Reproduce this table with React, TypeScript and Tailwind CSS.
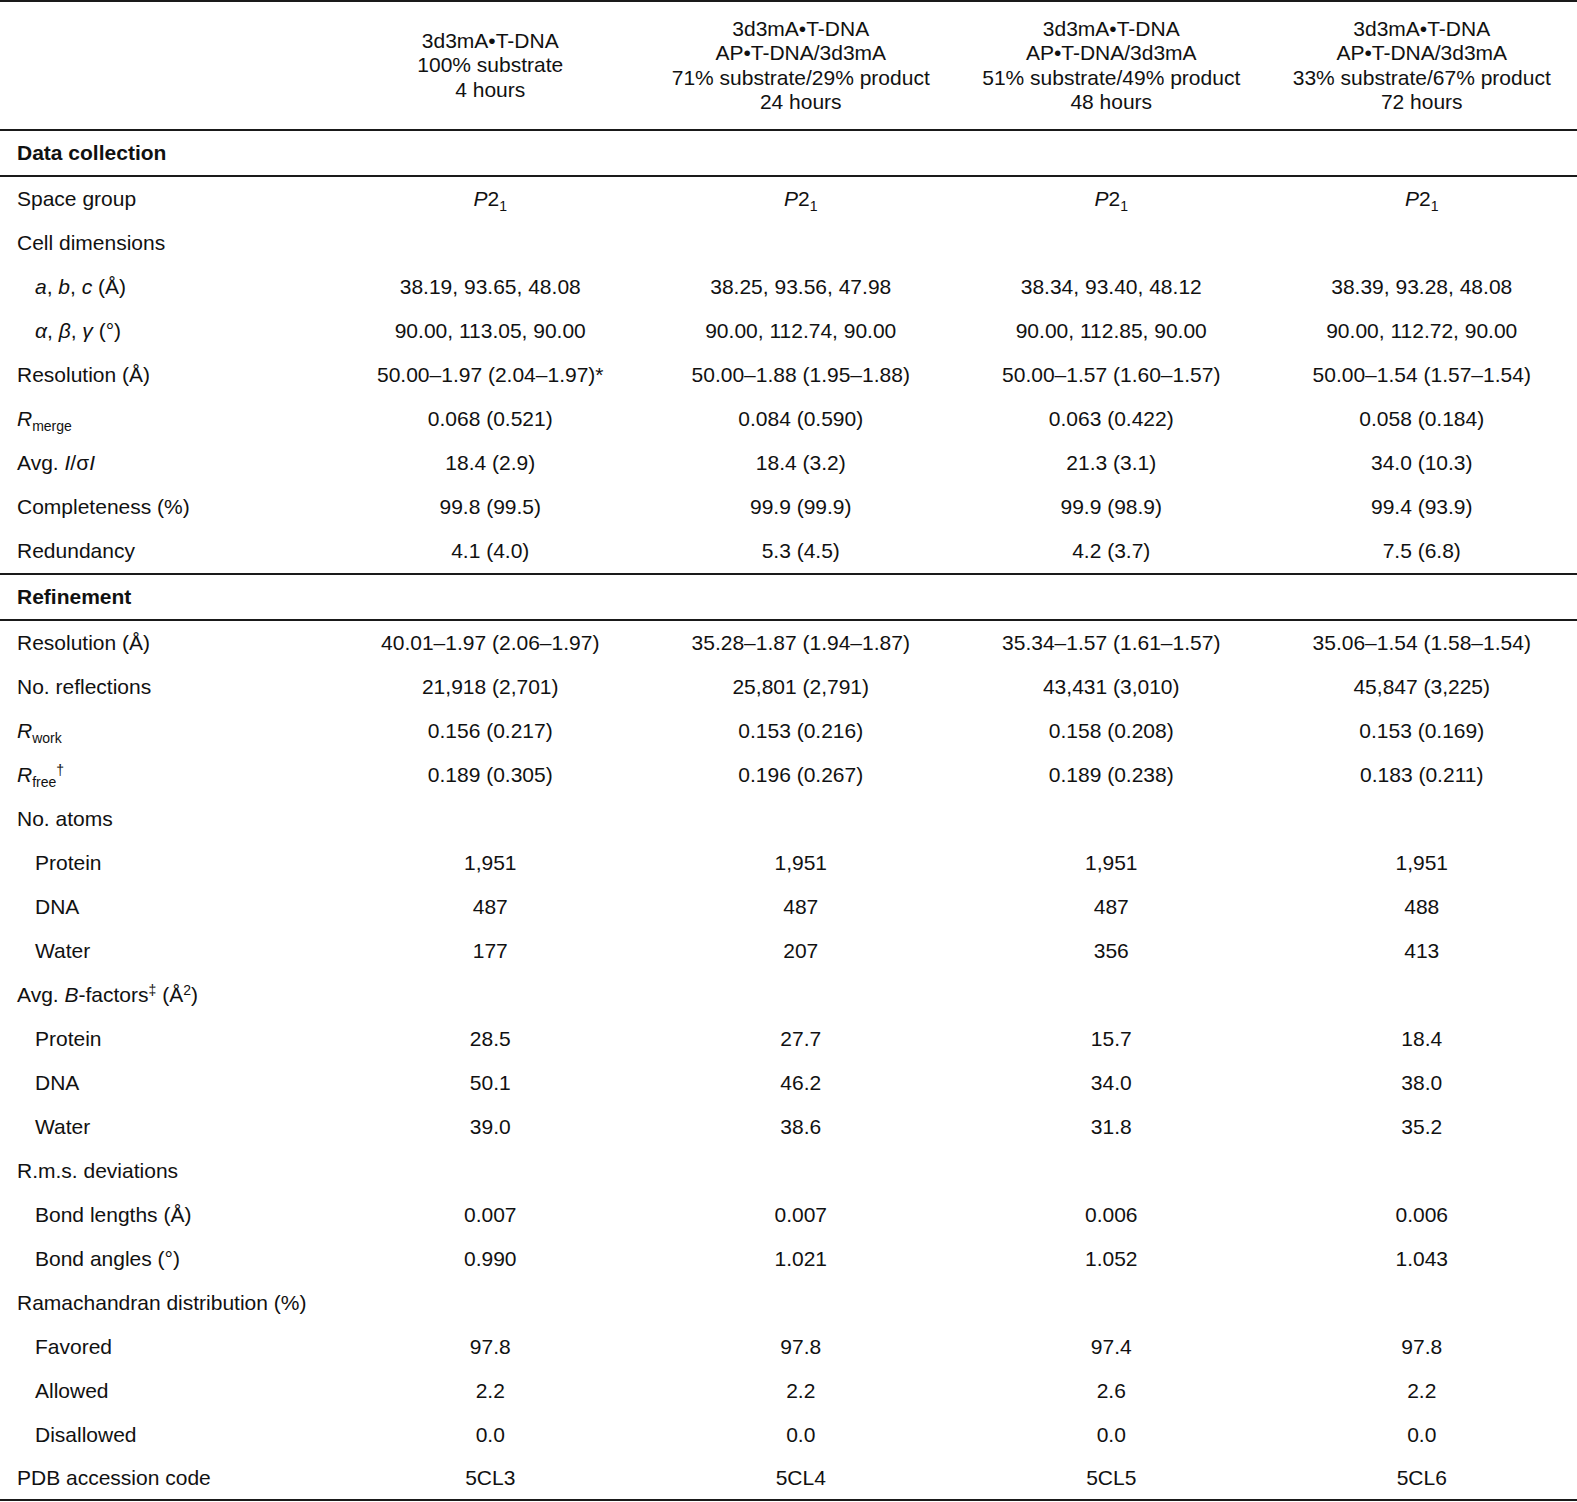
import React from "react";

type Row = {
  label: React.ReactNode;
  indent?: boolean;
  values?: React.ReactNode[];
};

const Sub = ({ children }: { children: React.ReactNode }) => (
  <span className="relative top-[5px] text-[14px] leading-none">{children}</span>
);

const Sup = ({ children }: { children: React.ReactNode }) => (
  <span className="relative -top-[7px] text-[14px] leading-none">{children}</span>
);

const p21 = (
  <span>
    <i>P</i>2<Sub>1</Sub>
  </span>
);

const headers = [
  ["3d3mA•T-DNA", "100% substrate", "4 hours"],
  ["3d3mA•T-DNA", "AP•T-DNA/3d3mA", "71% substrate/29% product", "24 hours"],
  ["3d3mA•T-DNA", "AP•T-DNA/3d3mA", "51% substrate/49% product", "48 hours"],
  ["3d3mA•T-DNA", "AP•T-DNA/3d3mA", "33% substrate/67% product", "72 hours"],
];

const collection: Row[] = [
  { label: "Space group", values: [p21, p21, p21, p21] },
  { label: "Cell dimensions" },
  {
    label: (
      <span>
        <i>a</i>, <i>b</i>, <i>c</i> (Å)
      </span>
    ),
    indent: true,
    values: ["38.19, 93.65, 48.08", "38.25, 93.56, 47.98", "38.34, 93.40, 48.12", "38.39, 93.28, 48.08"],
  },
  {
    label: (
      <span>
        <i>α</i>, <i>β</i>, <i>γ</i> (°)
      </span>
    ),
    indent: true,
    values: ["90.00, 113.05, 90.00", "90.00, 112.74, 90.00", "90.00, 112.85, 90.00", "90.00, 112.72, 90.00"],
  },
  {
    label: "Resolution (Å)",
    values: ["50.00–1.97 (2.04–1.97)*", "50.00–1.88 (1.95–1.88)", "50.00–1.57 (1.60–1.57)", "50.00–1.54 (1.57–1.54)"],
  },
  {
    label: (
      <span>
        <i>R</i>
        <Sub>merge</Sub>
      </span>
    ),
    values: ["0.068 (0.521)", "0.084 (0.590)", "0.063 (0.422)", "0.058 (0.184)"],
  },
  {
    label: (
      <span>
        Avg. <i>I</i>/σ<i>I</i>
      </span>
    ),
    values: ["18.4 (2.9)", "18.4 (3.2)", "21.3 (3.1)", "34.0 (10.3)"],
  },
  { label: "Completeness (%)", values: ["99.8 (99.5)", "99.9 (99.9)", "99.9 (98.9)", "99.4 (93.9)"] },
  { label: "Redundancy", values: ["4.1 (4.0)", "5.3 (4.5)", "4.2 (3.7)", "7.5 (6.8)"] },
];

const refinement: Row[] = [
  {
    label: "Resolution (Å)",
    values: ["40.01–1.97 (2.06–1.97)", "35.28–1.87 (1.94–1.87)", "35.34–1.57 (1.61–1.57)", "35.06–1.54 (1.58–1.54)"],
  },
  { label: "No. reflections", values: ["21,918 (2,701)", "25,801 (2,791)", "43,431 (3,010)", "45,847 (3,225)"] },
  {
    label: (
      <span>
        <i>R</i>
        <Sub>work</Sub>
      </span>
    ),
    values: ["0.156 (0.217)", "0.153 (0.216)", "0.158 (0.208)", "0.153 (0.169)"],
  },
  {
    label: (
      <span>
        <i>R</i>
        <Sub>free</Sub>
        <Sup>†</Sup>
      </span>
    ),
    values: ["0.189 (0.305)", "0.196 (0.267)", "0.189 (0.238)", "0.183 (0.211)"],
  },
  { label: "No. atoms" },
  { label: "Protein", indent: true, values: ["1,951", "1,951", "1,951", "1,951"] },
  { label: "DNA", indent: true, values: ["487", "487", "487", "488"] },
  { label: "Water", indent: true, values: ["177", "207", "356", "413"] },
  {
    label: (
      <span>
        Avg. <i>B</i>-factors<Sup>‡</Sup> (Å<Sup>2</Sup>)
      </span>
    ),
  },
  { label: "Protein", indent: true, values: ["28.5", "27.7", "15.7", "18.4"] },
  { label: "DNA", indent: true, values: ["50.1", "46.2", "34.0", "38.0"] },
  { label: "Water", indent: true, values: ["39.0", "38.6", "31.8", "35.2"] },
  { label: "R.m.s. deviations" },
  { label: "Bond lengths (Å)", indent: true, values: ["0.007", "0.007", "0.006", "0.006"] },
  { label: "Bond angles (°)", indent: true, values: ["0.990", "1.021", "1.052", "1.043"] },
  { label: "Ramachandran distribution (%)" },
  { label: "Favored", indent: true, values: ["97.8", "97.8", "97.4", "97.8"] },
  { label: "Allowed", indent: true, values: ["2.2", "2.2", "2.6", "2.2"] },
  { label: "Disallowed", indent: true, values: ["0.0", "0.0", "0.0", "0.0"] },
  { label: "PDB accession code", values: ["5CL3", "5CL4", "5CL5", "5CL6"] },
];

function Line() {
  return <div className="h-[2px] bg-[#1a1a1a]" />;
}

function TableRow({ row, last }: { row: Row; last?: boolean }) {
  return (
    <div className={`grid grid-cols-[335px_repeat(4,1fr)] items-center ${last ? "h-[42px]" : "h-[44px]"}`}>
      <div className={row.indent ? "pl-[35px]" : "pl-[17px]"}>{row.label}</div>
      {(row.values ?? ["", "", "", ""]).map((v, i) => (
        <div key={i} className="text-center">
          {v}
        </div>
      ))}
    </div>
  );
}

function SectionTitle({ title }: { title: string }) {
  return <div className="h-[44px] flex items-center pl-[17px] font-bold">{title}</div>;
}

export default function App() {
  return (
    <div className="w-[1577px] h-[1502px] bg-white text-[#111] text-[21px] leading-[24.5px] font-['Liberation_Sans',Arial,sans-serif]">
      <Line />
      <div className="h-[127px] grid grid-cols-[335px_repeat(4,1fr)] items-center">
        <div />
        {headers.map((h, i) => (
          <div key={i} className="text-center">
            {h.map((t, j) => (
              <div key={j}>{t}</div>
            ))}
          </div>
        ))}
      </div>
      <Line />
      <SectionTitle title="Data collection" />
      <Line />
      {collection.map((r, i) => (
        <TableRow key={i} row={r} />
      ))}
      <Line />
      <SectionTitle title="Refinement" />
      <Line />
      {refinement.map((r, i) => (
        <TableRow key={i} row={r} last={i === refinement.length - 1} />
      ))}
      <Line />
    </div>
  );
}
